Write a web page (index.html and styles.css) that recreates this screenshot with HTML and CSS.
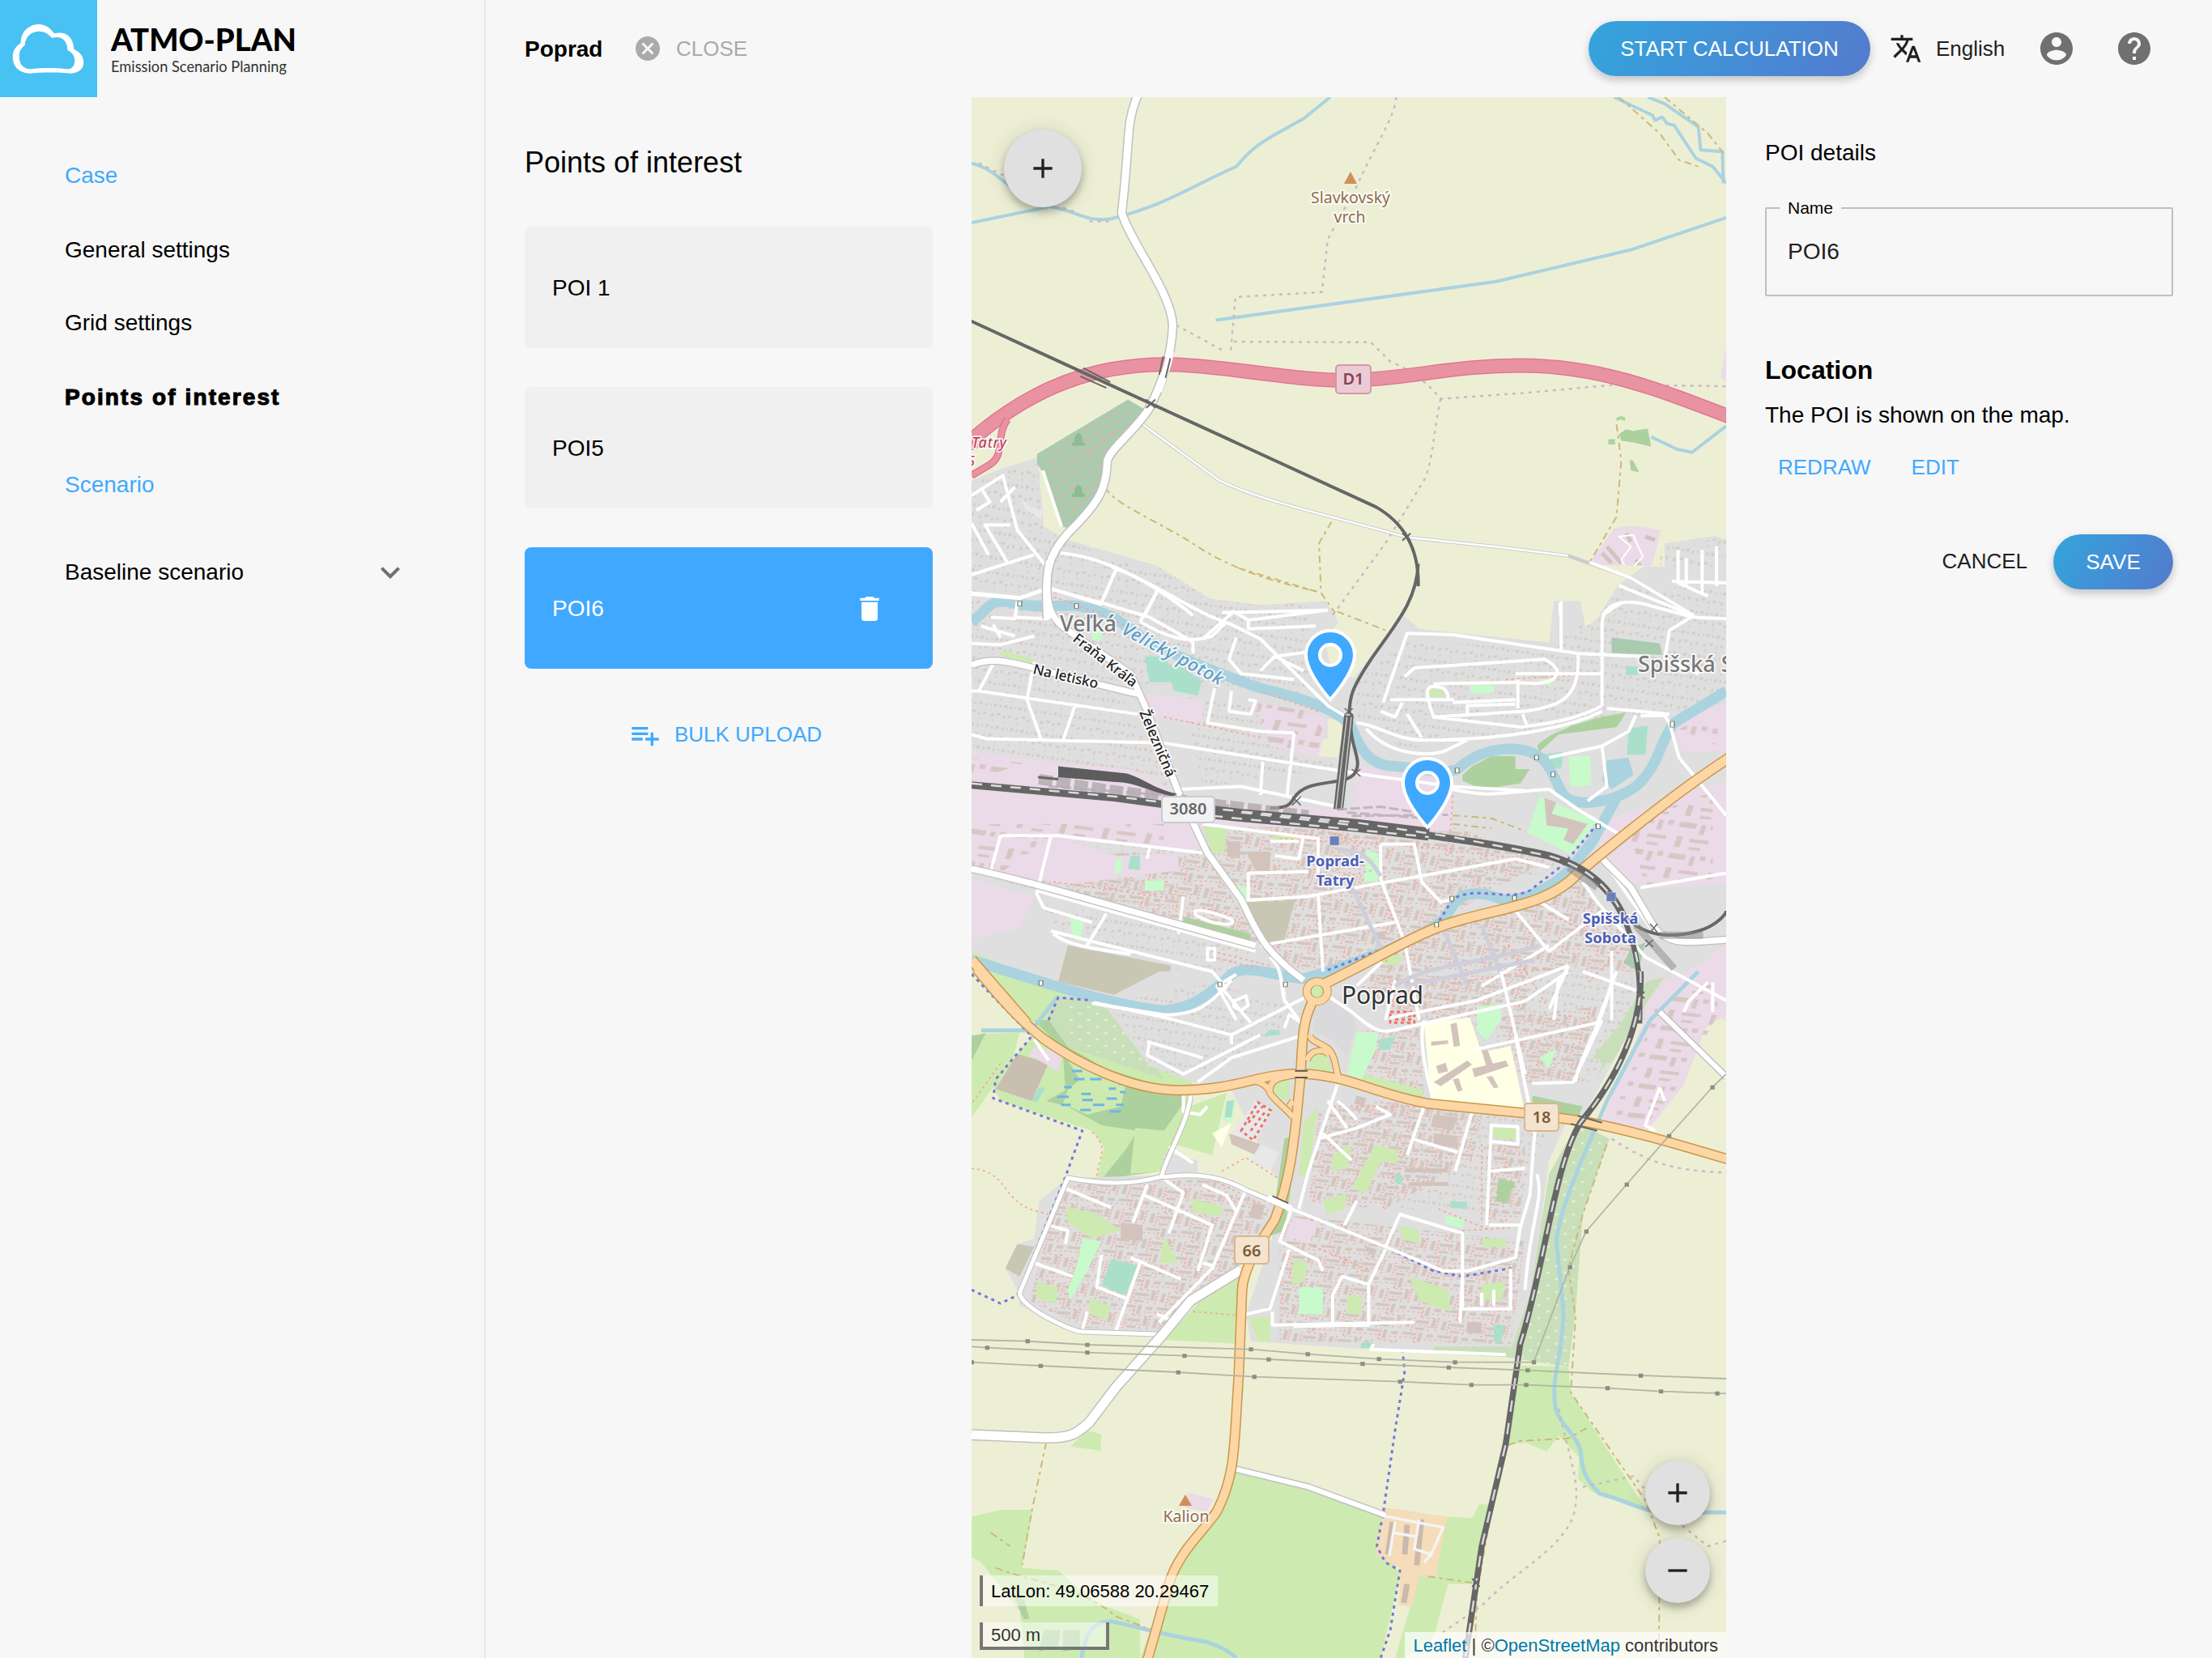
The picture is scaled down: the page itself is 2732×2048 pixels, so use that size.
FILE: index.html
```html
<!DOCTYPE html>
<html lang="en">
<head>
<meta charset="utf-8">
<title>ATMO-PLAN</title>
<link rel="stylesheet" href="styles.css">
</head>
<body>
<div class="app">
  <aside class="sidebar">
    <div class="brand">
      <svg class="brand-mark" viewBox="0 0 120 120"><path fill="#fff" fill-rule="evenodd" transform="scale(.3827 .3333)" d="M41 210C41 190 50 172 67 160C67 115 95 90 125 90C148 90 163 105 175 124C205 115 236 128 239 183C262 193 270 215 270 232C270 262 245 272 228 272C200 268 130 266 100 272C60 272 41 245 41 210ZM62 210C62 190 68 178 80 168C82 135 100 116 128 116C150 118 158 130 168 141C195 132 217 145 218 187C235 195 241 210 241 225C241 245 232 257 215 256C190 251 130 250 100 256C75 258 62 235 62 210Z"/></svg>
      <svg class="brand-name" viewBox="0 0 240 120"><text class="bn1" x="0" y="62.5" textLength="229" lengthAdjust="spacingAndGlyphs">ATMO-PLAN</text><text class="bn2" x="0" y="89" textLength="217" lengthAdjust="spacingAndGlyphs">Emission Scenario Planning</text></svg>
    </div>
    <nav class="nav">
      <a class="nav-head">Case</a>
      <a>General settings</a>
      <a>Grid settings</a>
      <a class="current">Points of interest</a>
      <a class="nav-head second">Scenario</a>
      <a class="expand">Baseline scenario<svg class="ic48" viewBox="0 0 24 24"><path d="M16.59 8.59L12 13.17 7.41 8.59 6 10l6 6 6-6z"/></svg></a>
    </nav>
  </aside>
  <div class="content">
    <header class="topbar">
      <b class="case-name">Poprad</b>
      <span class="close"><svg viewBox="0 0 24 24"><path d="M12 2C6.47 2 2 6.47 2 12s4.47 10 10 10 10-4.47 10-10S17.53 2 12 2zm5 13.59L15.59 17 12 13.41 8.41 17 7 15.59 10.59 12 7 8.41 8.41 7 12 10.59 15.59 7 17 8.41 13.41 12 17 15.59z"/></svg><span>CLOSE</span></span>
      <button class="pill start">START CALCULATION</button>
      <span class="lang"><svg class="ic40" viewBox="0 0 24 24"><path d="M12.87 15.07l-2.54-2.51.03-.03c1.74-1.94 2.98-4.17 3.71-6.53H17V4h-7V2H8v2H1v1.99h11.17C11.5 7.92 10.44 9.75 9 11.35 8.07 10.32 7.3 9.19 6.69 8h-2c.73 1.63 1.73 3.17 2.98 4.56l-5.09 5.02L4 19l5-5 3.11 3.11.76-2.04zM18.5 10h-2L12 22h2l1.12-3h4.75L21 22h2l-4.5-12zm-2.62 7l1.62-4.33L19.12 17h-3.24z"/></svg><span>English</span></span>
      <svg class="ic48 account" viewBox="0 0 24 24"><path d="M12 2C6.48 2 2 6.48 2 12s4.48 10 10 10 10-4.48 10-10S17.52 2 12 2zm0 3c1.66 0 3 1.34 3 3s-1.34 3-3 3-3-1.34-3-3 1.34-3 3-3zm0 14.2c-2.5 0-4.71-1.28-6-3.22.03-1.99 4-3.08 6-3.08 1.99 0 5.97 1.09 6 3.08-1.29 1.94-3.5 3.22-6 3.22z"/></svg>
      <svg class="ic48 help" viewBox="0 0 24 24"><path d="M12 2C6.48 2 2 6.48 2 12s4.48 10 10 10 10-4.48 10-10S17.52 2 12 2zm1 17h-2v-2h2v2zm2.07-7.75l-.9.92C13.45 12.9 13 13.5 13 15h-2v-.5c0-1.1.45-2.1 1.17-2.83l1.24-1.26c.37-.36.59-.86.59-1.41 0-1.1-.9-2-2-2s-2 .9-2 2H8c0-2.21 1.79-4 4-4s4 1.79 4 4c0 .88-.36 1.68-.93 2.25z"/></svg>
    </header>
    <div class="columns">
      <section class="list">
        <h1>Points of interest</h1>
        <div class="card">POI 1</div>
        <div class="card">POI5</div>
        <div class="card active"><span>POI6</span><svg class="ic40" viewBox="0 0 24 24"><path d="M6 19c0 1.1.9 2 2 2h8c1.1 0 2-.9 2-2V7H6v12zM19 4h-3.5l-1-1h-5l-1 1H5v2h14V4z"/></svg></div>
        <div class="bulk"><svg class="ic40" viewBox="0 0 24 24"><path d="M14 10H2v2h12v-2zm0-4H2v2h12V6zm4 8v-4h-2v4h-4v2h4v4h2v-4h4v-2h-4zM2 16h8v-2H2v2z"/></svg><span>BULK UPLOAD</span></div>
      </section>
      <section class="map">
        <svg class="tiles" viewBox="0 0 932 1928">
          <defs>
            <pattern id="homes" width="53" height="74" patternUnits="userSpaceOnUse" patternTransform="rotate(14)"><path fill="#d2c6bd" fill-opacity=".8" d="M2 4h6v10H2zM14 6h4v8h-4zM24 3h6v10h-6zM37 7h4v9h-4zM47 5h3v7h-3zM4 38h5v10H4zM15 34h8v7h-8zM30 40h4v10h-4zM40 36h5v9h-5zM10 58h3v6h-3zM34 60h3v5h-3z"/></pattern>
            <pattern id="estate" width="74" height="96" patternUnits="userSpaceOnUse" patternTransform="rotate(10)"><path fill="#d3c4bb" fill-opacity=".9" d="M4 6h26v10H4zM38 4h8v34h-8zM55 8h14v11H55zM6 50h8v34H6zM24 56h28v10H24zM58 46h8v32h-8zM26 82h20v8H26z"/><path fill="none" stroke="#fa9c92" stroke-width="3" stroke-dasharray="5 6" d="M0 26H32V0M34 44H74M52 28H74M20 46V96M22 74H54V96M70 40V96M32 26V44"/></pattern>
            <pattern id="sheds" width="90" height="110" patternUnits="userSpaceOnUse" patternTransform="rotate(12)"><path fill="#d3c3bd" fill-opacity=".85" d="M4 6h36v18H4zM50 8h10v34H50zM70 4h12v16H70zM8 56h12v38H8zM36 60h40v12H36zM40 88h24v9H40z"/></pattern>
            <pattern id="dots" width="36" height="48" patternUnits="userSpaceOnUse"><path fill="#e4efd9" d="M6 8h6v8H6zM24 32h6v8h-6z"/></pattern>
            <g id="pin"><path fill="#40a9ff" stroke="#fff" stroke-width="8" paint-order="stroke" d="M0-80C-15.500-80-28-67.500-28-52C-28-31 0 0 0 0S28-31 28-52C28-67.500 15.500-80 0-80ZM0-37A15 15 0 1 1 0-67A15 15 0 1 1 0-37Z" fill-rule="evenodd"/></g>
          </defs>
          <rect width="932" height="1928" fill="#edefd5"/>

          <!-- land use: north -->
          <g class="north">
            <g fill="#dfdfdf"><path d="M0 1160L60 1125L138 1090L150 1300L200 1340L390 1420L495 1515L600 1535L735 1522L765 1600H0ZM1440 1350L1545 1328L1568 1340V1600H1300L1340 1490L1400 1445L1440 1465ZM1208 1520H1263V1600H1208Z"/></g>
            <path fill="url(#homes)" d="M0 1170L60 1135L138 1110L150 1300L200 1350L390 1430L495 1515L600 1540L735 1530L765 1600H0ZM1450 1360L1545 1338L1568 1340V1600H1320L1350 1490Z"/>
            <path fill="#aacbaf" d="M325 915L360 945L345 995L283 1075L278 1150L240 1240L205 1305L187 1300L150 1140L136 1110V1080Z"/>
            <path class="l foot" d="M320 935L160 1080M335 950L155 1115M345 970L150 1150M300 1010L160 1170M280 1060L160 1200M278 1100L175 1220M270 1150L180 1250M255 1190L190 1280"/>
            <path fill="#8dbb93" d="M208 1046H213L216 1022Q222 1012 228 1022L231 1046H236V1055H208ZM208 1201H213L216 1180Q222 1168 228 1180L231 1201H236V1210H208Z"/>
            <path fill="#e8e8e8" d="M105 1215L120 1240L150 1250L145 1278L110 1245Z"/>
            <path fill="#add19e" d="M1340 980V970L1350 965L1358 970V980L1349 975ZM1345 1020L1360 1005L1375 1010L1405 1003L1412 1058L1375 1045L1350 1040ZM1323 1035h14v16h-14zM1367 1098L1375 1100L1387 1135L1370 1130Z"/>
            <path fill="#ebdbe8" d="M1335 1305L1370 1296L1433 1310L1415 1410L1395 1465L1350 1450L1284 1408ZM1568 750L1556 850L1568 860Z"/>
            <path class="l" stroke="#d3c3bd" stroke-width="5" d="M1320 1360L1350 1410M1310 1380L1330 1410M1360 1320L1370 1345M1400 1330L1420 1340M1380 1400L1400 1440"/>
            <path class="l" stroke="#fff" stroke-width="2" d="M1370 1450L1350 1400L1370 1360L1345 1330L1375 1325L1385 1360L1395 1390L1370 1430"/>
          </g>

          <!-- land use: town centre -->
          <g class="mid">
            <path fill="#dfdfdf" d="M0 0H1568V1568H0Z"/>
            <path fill="url(#homes)" d="M0 0H400L700 140V440L300 400L420 780L0 640ZM800 400L900 250L1200 290L1340 60L1568 80V480L1150 580L900 630L800 540ZM100 900H420V1250L0 1060ZM440 440L640 480L760 700L480 760ZM1000 940L1200 1010L1230 1050L1000 1110ZM420 1330L700 1440V1568H430ZM130 1150L600 1310L520 1400L200 1300Z"/>
            <path fill="url(#estate)" d="M480 900H1000L1200 1010L1000 1200L740 1390H640L500 1000ZM860 1340L1100 1180L1260 1080L1380 1300V1568H800ZM160 1000L480 980L600 1300L140 1130Z"/>
            <path fill="#edefd5" d="M385 -4L495 110L600 132L735 118L762 190L735 260L750 370L795 385L895 165L930 215L1200 262L1210 118L1265 118L1275 210L1300 180L1345 60L1400 -4ZM740 525L775 540L760 660L720 655V595H740Z"/>
            <g id="industry"><path fill="#ebdbe8" d="M0 640L180 680L330 700L430 780L500 810L760 840L1000 830V915L700 905L480 890V980L300 960L0 930ZM0 930L160 930L300 1000L430 990V1050L200 1100L0 1040ZM350 440L480 460V540L380 520ZM590 470L700 500L740 530L720 660L620 620ZM800 690L1000 740V910L790 860ZM1330 870L1568 740V1100L1400 1110L1290 1010ZM1440 550L1568 470V640L1480 640ZM0 1080L130 1140L100 1250L0 1290ZM1400 1530L1568 1300V1568H1400Z"/>
            <path fill="url(#sheds)" d="M0 660L110 680L0 740ZM0 890H400V960L0 930ZM0 950H150L60 1060H0ZM590 470L700 500L730 560L720 640L620 620ZM1360 880L1540 780V1080L1400 1100ZM1470 560L1550 510V620Z"/></g>
            <path fill="#add19e" d="M1175 620C1200 570 1290 520 1360 505L1340 555L1220 580L1180 640ZM1020 720L1040 690L1080 655H1130V700H1160L1140 750L1060 770L1020 740ZM440 1210L580 1270V1305L440 1250Z"/>
            <path fill="#aacbaf" d="M1330 245L1430 265L1435 305L1330 298ZM1370 1320L1400 1300L1385 1400L1355 1370Z"/>
            <path fill="#aae0cb" d="M360 310H405L410 345H435L478 395L470 445L420 430L415 400H370ZM1365 560L1405 550L1400 650L1362 650ZM1180 650L1230 640L1225 700L1200 690ZM330 1000H350V1050L325 1045ZM1360 345H1385V375H1360Z"/>
            <path fill="#cdebb0" d="M480 900L530 905L525 990L500 990ZM625 928L675 935V955L630 950ZM0 1330L140 1430L200 1480L160 1568H110L30 1420ZM60 290L130 320V335L60 308ZM950 425H980V450H945ZM870 1340L900 1350L880 1380L850 1370Z"/>
            <path fill="#c8facc" d="M1240 655H1285L1288 755L1245 762ZM1155 920L1180 795L1300 880L1245 995ZM1035 410H1085V435L1038 440ZM1180 390L1215 385L1200 415ZM820 980L845 990V1090L815 1090ZM1170 1460L1210 1500L1200 1530L1175 1520ZM1040 1520L1100 1510V1568H1035ZM300 1010H312V1060H296ZM545 1100L575 1110V1150L555 1145ZM360 1085H400V1120H360ZM205 1210L235 1225L225 1290L208 1270ZM250 215H270V255H250Z"/>
            <path fill="#d3c3bd" d="M1190 800L1215 815L1205 855L1280 890L1250 960L1230 945L1240 905L1195 895ZM570 985H620V1055L590 1050ZM530 950H558V1010L532 1000ZM840 1265L860 1260V1290L836 1285Z"/>
            <path fill="#aad3df" d="M1320 670L1365 660L1375 720L1330 770L1310 740Z"/>
            <path fill="#c7c7b4" d="M570 1160L672 1155L650 1290L600 1310ZM200 1310L415 1380L395 1520L180 1435Z"/>
          </g>

          <!-- land use: south -->
          <g class="south">
            <path fill="#edefd5" d="M0 0H25L140 235L0 235ZM0 235H1568V2544H0ZM1560 160L1525 210L1480 420H1568Z"/>
            <path fill="#cdebb0" d="M14 0H60L180 90L400 160L370 350L460 400L450 500L390 740L260 775L275 650L250 590L60 480L45 430L100 290L130 240ZM0 235L100 225L85 330L0 540Z"/>
            <path fill="#c8dfb9" d="M180 90L270 110L380 170L360 280L400 400L200 280L150 200Z"/><path fill="url(#dots)" d="M190 100L370 160L350 280L380 370L210 270Z"/>
            <path fill="#add19e" d="M190 310L440 450V480L390 740L270 770L320 660L345 590L270 570L200 500L155 480L195 440ZM0 240L30 228L0 330ZM130 180L160 180L200 280L260 340L200 310Z"/>
            <path fill="#cdebb0" d="M200 330L320 420L310 500L240 530L190 490L200 440L225 400ZM340 580L400 590L440 490L455 500L395 740L330 750Z"/>
            <path fill="#dfdfdf" d="M270 110L390 0H1390L1375 200L1270 540L1150 500L960 480L760 410L690 900L640 860L630 760L540 440L460 410L370 350ZM200 765L400 755L500 750L640 850L600 980L550 1110L390 1345L230 1335L100 1240L95 1180L70 1100L95 1010L130 990L140 850ZM700 400L960 490L1240 540L1200 700L1150 1380L1110 1410L950 1415L580 1370L570 1270L640 900ZM400 670L470 700V750H395Z"/>
            <path fill="#edefd5" d="M485 660L520 650L640 770L625 845L560 800L500 750Z"/>
            <path fill="url(#homes)" d="M280 120L500 40L690 150L540 340L420 390L370 340ZM820 20L1380 10L1360 200L1280 420L1150 410L900 200ZM740 500L900 470L1200 550L1140 900L900 880L740 760Z"/>
            <path fill="url(#estate)" d="M200 790L500 770L620 880L570 1080L390 1330L230 1320L120 1220L160 960ZM640 900L1150 1000L1120 1380L640 1370ZM720 520L880 480L1060 540L1040 700L860 880L700 860ZM820 10H1150L1160 140L940 190L840 100ZM1090 170L1300 130L1260 420L1150 410ZM810 220L930 210L940 460L820 400ZM1070 640L1150 650L1140 930L1070 930Z"/>
            <path fill="#cdebb0" d="M450 500L530 450L500 680L420 640ZM195 870L260 900L310 960L250 990L200 930ZM455 840L520 870V910L460 890ZM135 1150L180 1170L175 1230L135 1210ZM245 1210L290 1240L280 1290L245 1270ZM840 640L885 665V710L850 705L820 820L790 800ZM730 850L780 820L775 880L740 900ZM540 1120H555V1380L400 1365L470 1230ZM890 940L930 960V1010L895 990ZM910 1130L990 1180L995 1260L930 1220ZM1080 580H1135V620H1085ZM750 680L790 640L780 730L750 740ZM1060 990H1110V1020H1060ZM1060 1160L1110 1150L1100 1220L1060 1215ZM670 1070L700 1080L690 1150L665 1160ZM780 1200H810V1270H780ZM400 980L430 1080L390 1080ZM575 1280H620V1370H595ZM690 560L720 500L700 750L680 760ZM820 380L940 440L930 480L800 420Z"/>
            <path fill="#c8facc" d="M800 225L845 225L840 290L810 400L780 380ZM230 990L270 1000L240 1110L205 1220L200 1180L220 1080ZM680 1170H730V1270H680ZM985 905L1025 915L1020 950L985 935ZM1050 130L1100 120V180L1070 255L1050 220ZM1180 320L1215 285L1200 360ZM530 480L550 470L540 560L520 550Z"/>
            <path fill="#aae0cb" d="M850 250L880 240L870 290L845 290ZM290 1065L345 1090L320 1200L270 1165ZM995 850L1030 855V880L995 875ZM1085 1310H1108L1100 1375H1085ZM880 750L895 755V790L878 780ZM140 430L155 430L135 485L125 480ZM810 1375H835V1395H808ZM530 480L545 478L540 540L526 540ZM620 215L640 218V235L605 240Z"/>
            <path fill="#ffffe5" d="M940 190L1035 170L1060 300L1120 275L1148 505L955 475ZM500 600L540 560L520 650Z"/>
            <path fill="#d3c3bd" d="M995 195L1008 190L1015 275L1002 280ZM955 260L990 255V268L955 275ZM965 350L985 338L990 370L970 378ZM960 410L1030 330L1040 345L975 425ZM1060 295L1072 290L1085 350L1070 355ZM1040 360L1110 330L1116 350L1045 392ZM1000 400L1012 395L1020 440L1010 445ZM1070 390L1082 388L1095 430L1085 432ZM535 600L600 640L590 680L540 640ZM800 460L820 470L815 500L795 490ZM585 860L610 865L600 920L575 910ZM900 730H990V745H900ZM910 780H990V795H910ZM310 930L355 940V1000L310 990ZM815 1015L840 1030L830 1050ZM1030 1300H1060V1340H1030ZM960 530L1010 540L1000 590L955 575ZM960 600L1010 610V655L960 640Z"/>
            <path fill="#e8e8e8" d="M600 640L640 670L620 740L580 700ZM540 600L590 480L625 510L590 630Z"/>
            <path fill="#dadadc" d="M710 130L770 90L800 200L780 310L745 250L710 220Z"/>
            <path class="l foot2" d="M560 590L595 485L622 515L585 625ZM575 560L605 500M580 590L612 515M870 150L920 150V190L870 190ZM880 165H915M880 178H915"/>
            <path fill="#c9bfb0" d="M95 305L160 340L125 480L50 435Z"/><path fill="#ebdbe8" d="M1400 60L1568 -60V160L1525 210L1480 420L1400 600L1310 550L1400 170ZM130 280L190 300L180 370L120 310ZM670 910L720 930L700 1010L655 980ZM450 1930L502 1955L490 2000L445 1990Z"/>
            <path fill="url(#sheds)" d="M1420 130L1550 20V160L1470 420L1400 570L1330 540L1410 200Z"/>
            <path fill="#c7c7b4" d="M95 1010L130 1020L100 1130L70 1100Z"/>
            <path fill="#c8dfb9" d="M1260 560L1325 620L1270 900L1255 1260L1240 1465L1115 1430L1160 1200L1200 750ZM960 1390L1120 1390V1430L960 1415ZM1400 40L1440 20L1370 200L1300 390L1340 220ZM1340 210L1370 210L1330 340L1290 320Z"/>
            <path fill="url(#dots)" d="M1260 570L1310 620L1260 900L1240 1465H1120L1170 1200Z"/>
            <path fill="#add19e" d="M1165 460L1270 500L1260 540L1165 500ZM1095 770L1130 780L1110 860L1090 850ZM650 620L680 600L650 960L620 980Z"/>
            <path fill="#cdebb0" d="M1140 1460L1240 1465L1245 1560L1310 1740L1400 1990L1290 1930L1260 1880L1262 1800L1220 1720L1195 1780L1150 1745L1115 1755ZM540 1840L860 2010L850 2130L880 2200L890 2240L850 2544H350L390 2360L440 2150L500 2020ZM0 2020L60 1995H128L105 2210L180 2220L260 2340L350 2400V2544H110L100 2370L20 2190L0 2170ZM990 2020L1040 2025L1055 1975H1075L1040 2270H990L960 2470L900 2544H880L930 2240ZM240 1700L270 1715L268 1775L205 1760Z"/>
            <path fill="#add19e" d="M85 2300L110 2330L120 2400H108ZM150 2440H185L180 2500L140 2520ZM190 2440H225V2510L190 2520Z"/>
            <path fill="#f5dcba" d="M855 1985L988 2020L965 2240H930L915 2355L888 2350L890 2210L840 2160Z"/>
            <path class="l" stroke="#cbb9ae" stroke-width="7" d="M875 2040L865 2160M905 2050L900 2160M935 2030L925 2200M905 2270L898 2340"/>
            <path class="l" stroke="#f4f4f4" stroke-width="3.500" d="M850 2015L980 2060L955 2160L920 2140L930 2030M880 2040L868 2165M878 2080L925 2095M940 2190L955 2160"/>
            <path class="l" stroke="#6fb5e6" stroke-width="3" d="M208 369H230M212 399H235M246 399H270M192 429H208M285 434H300M228 454H248M178 464H202M230 476H252M280 471H302M186 494H206M252 494H276M300 494H316M226 513H248M287 518H310M306 417H318M308 447H320"/>
          </g>

          <!-- water -->
          <g class="north"><path class="l water" stroke-width="4" d="M0 200C60 220 80 300 160 330C220 345 240 380 290 368C400 330 470 260 550 210C590 140 610 130 690 65L745 0M0 380L160 332M507 675L1090 558L1370 462L1568 365M1412 1028L1465 1065L1497 1075L1568 995M1335 0L1415 55L1420 70L1435 60L1445 80L1460 85L1480 130L1505 185L1540 210L1568 260M1405 0L1440 20L1510 90L1515 160L1560 165L1562 260"/></g>
          <g class="mid"><path class="l water" stroke-width="13" d="M0 190C30 160 30 120 70 120C140 150 170 130 220 135C290 160 310 190 350 240C400 290 480 350 600 420C700 460 770 500 790 560C810 640 830 690 880 690C950 700 980 720 1010 700C1050 640 1100 620 1150 635C1200 660 1200 700 1230 790C1260 840 1340 810 1380 760C1430 690 1430 600 1460 540L1568 430M1340 800L1290 950L1245 1045C1200 1120 1140 1160 1100 1150C1040 1110 1010 1130 990 1200C960 1270 850 1340 740 1400L690 1425C640 1420 570 1370 540 1410C500 1470 460 1530 400 1535C300 1520 150 1440 0 1360"/></g>
          <g class="south"><path class="l water" stroke-width="5" d="M20 218H125L180 90M1510 0L1410 180L1320 480C1280 650 1220 880 1215 1000L1230 1260C1230 1400 1205 1500 1212 1600C1215 1670 1250 1700 1265 1770C1270 1850 1270 1870 1305 1935C1360 1960 1380 1990 1430 2005H1568M228 2544C240 2440 250 2410 290 2408C350 2430 400 2460 490 2485C530 2510 540 2530 550 2544"/></g>

          <!-- footpaths, tracks, boundaries -->
          <g class="north">
            <path class="l bound" d="M882 0C880 60 840 140 800 270L740 430L728 590L548 605L538 780M425 690L520 765M545 740L830 742L870 800C920 830 950 870 975 913L1150 895L1340 870L1568 875M975 913C960 1000 960 1100 940 1160L860 1350L750 1568M15 200L70 240M190 335L220 350M245 376H285"/>
            <path class="l track" d="M278 1180C290 1230 400 1290 480 1370C560 1440 640 1470 720 1497M748 1285L722 1350L726 1500L755 1560M1345 0L1430 110L1470 190L1510 210M1440 0L1530 110L1568 180M1340 990L1350 1100L1340 1270L1284 1408"/>
          </g>
          <g class="mid">
            <path class="l foot" d="M160 100C240 140 330 200 460 340M720 500L600 430M480 1180L600 1230M500 1330L620 1380M700 1100L860 1040M640 940L1000 975M850 1130L900 1300M1000 790L995 915M480 890L720 930M650 870L820 960M170 1090L430 1150M1110 390L1310 370M1310 370V480M400 520L600 590M1200 1200L1350 1320L1280 1440M1000 1440L1200 1390M800 1450L1000 1500M1090 1240L1200 1530M500 1350L600 1390M860 1340L880 1568"/>
            <path class="l track" d="M555 5L725 90M760 155L860 220M1000 860L1080 870L1150 915M1000 890L1080 905"/>
            <path class="l cycle" d="M740 1395L960 1255L1000 1150C1050 1100 1110 1160 1160 1120L1230 1030L1300 890M0 1380L110 1568M160 1568L180 1490L250 1500"/>
          </g>
          <g class="south">
            <path class="l cycle" d="M0 10L125 240L50 400L45 470L230 590L195 760L95 1200L60 1230L0 1180M690 900L860 1020L960 1110L1020 1130L1120 1100V1240M895 1400L900 1480L880 1700L855 2010L842 2130L860 2190L890 2220L870 2440L850 2544"/>
            <path class="l foot" d="M0 730C80 740 60 860 140 890L160 900M250 595C290 650 260 700 260 770M520 740L570 690L640 770M460 1260L555 1275M440 540L400 700M60 340L0 490M740 500L950 500M1060 640V930M700 1010L830 1110M500 770L600 860M1020 960L1120 950M970 880L1080 960"/>
            <path class="l track" d="M155 1745L125 2000L105 2200M1320 640L1270 900L1240 1100L1255 1280L1245 1560L1400 1960L1430 2100L1428 2540M1115 1755L1140 1740L1240 1730L1280 1690M1040 2265L940 2240M1120 1600L1090 1900L1050 2300L1045 2544M40 2080L80 2130M50 2210C120 2260 230 2280 300 2390L360 2430"/>
            <path class="l bound" d="M1220 1620C1240 1800 1270 1900 1250 2020C1220 2150 1130 2220 1060 2350L970 2460M1330 620C1400 700 1450 740 1568 745M1270 1910L1375 1870L1440 2000L1530 2130L1568 2110"/>
          </g>

          <!-- streets -->
          <g class="north">
            <path class="l minor-c" d="M355 990L515 1160C600 1220 700 1250 905 1332L1100 1362L1240 1388L1370 1455L1500 1568"/><path class="l minor" stroke-width="2.500" d="M355 990L515 1160C600 1220 700 1250 905 1332L1100 1362L1240 1388"/>
            <path class="l st" d="M1284 1408L1370 1455L1500 1568M0 1205L65 1145L95 1310L155 1420M0 1445L130 1385M20 1185L38 1225L10 1250M75 1410L28 1295H80M185 1380C260 1390 350 1440 460 1568M0 1500L100 1515L160 1485L270 1535M300 1430L270 1530M385 1495L360 1568M0 1290L35 1385M148 1130L187 1300M520 1560L740 1553M1468 1370V1470L1530 1510M1485 1395V1480M1518 1370V1500M1548 1360V1480M1455 1465L1568 1470M1223 1530V1568M60 1225L90 1180M1350 1530L1310 1568"/>
          </g>
          <g class="mid">
            <path class="l st" d="M0 95L100 110L160 75L270 125L370 175L460 260L460 300M290 0C400 70 450 150 540 200L600 250L740 480L780 520M300 10L270 125M385 90L350 190M480 250L545 155L575 185L740 150M575 185V215L715 205M550 245L535 320L560 370L670 390M630 310L700 295M690 360L630 310L600 360M350 190C400 240 450 270 500 240L530 190M90 175L160 180M95 120L90 180L40 175M45 200L60 245M0 265L60 270L130 240M20 205L90 240M15 430L345 510M130 330L115 460L145 600M0 430L15 430L50 320M215 480L190 600M0 580L30 595L400 610L820 720L1000 760L1150 775M670 575L655 800M605 675L600 790M670 575L600 570L490 540L505 420M540 430L535 500L580 510L590 465L575 460M430 770L560 760L760 830M855 470L905 230L1000 235L1260 300L1390 310M1225 120V290M1310 480L1310 200C1310 130 1350 110 1400 130L1500 175L1568 180M1320 490L1450 510M1345 65L1500 170L1450 220L1440 320L1510 370M1310 480C1250 540 1150 550 1145 555L960 520C940 430 940 400 980 420C1000 450 980 460 1000 460L870 460M900 380L920 350L1190 320C1240 360 1220 420 1130 400L960 405M1260 300C1265 450 1230 480 1150 500L960 520M1135 390V490M1000 470L1130 460M1030 510L1030 480L1130 475M1145 510L1155 555M905 510L935 590M850 500L880 520L895 470M800 540C850 550 880 600 940 600C1100 600 1240 560 1310 500M820 560C860 640 930 660 980 640L1030 600M1130 370L1310 370M1390 515L1440 515L1450 540L1470 660L1568 860M1380 515L1365 570L1310 620L1320 760L1280 810M1000 770C1080 800 1100 780 1200 770L1260 840L1350 930M1310 620L1200 660M1470 660L1510 740"/>
            <path class="l st" d="M60 930L180 930L480 990M60 930L40 1050M165 930L135 1130L150 1180L250 1230M135 1120L590 1330M370 970L365 1010M440 1140L430 1270M165 1260L500 1400L530 1460M240 1310L280 1200M470 1210C450 1180 480 1180 540 1220C550 1240 530 1240 500 1230ZM170 1270C200 1310 250 1320 330 1340M560 1155L700 1140L830 1100L1000 1050L1130 1010L1200 1040M575 1150V1060L700 1055M600 1310L880 1230M720 1130L730 1400M480 890L720 940V1060M850 960H920L935 1090L975 1160L1000 1150M850 960L850 1080L900 1300L930 1568M800 1450L850 1370L840 1330M1270 1090L1300 1160L1400 1350L1568 1500M1130 1190L1200 1330L1310 1190M1180 1160L1240 1220M860 1568L880 1430M1200 1310L1060 1450M1240 1380L1200 1530M1330 1330V1568M620 950H680M630 1000L680 1010L690 930M870 1560L1050 1500L1240 1380M1390 1110L1568 1060M1310 1010L1420 1270M1210 1568L1220 1420M550 1410L510 1450L550 1568M250 1510L400 1550C480 1550 500 1500 540 1430M620 1350C650 1400 640 1440 650 1500L680 1568M490 1320h15v40h-15z"/>
            <path class="l ped" d="M760 980C820 980 830 1020 850 1070M790 1110L860 1350M980 1250L1030 1450M1060 1240L1100 1410M880 1450C950 1370 1050 1380 1180 1310M900 1450L1170 1360"/>
          </g>
          <g class="south">
            <path class="l st" d="M255 115L400 170L540 235L700 90M515 50L580 190M540 235V270M570 90L545 110L545 130L560 145L575 125ZM470 410L540 320L690 235M365 260L480 320M370 260L365 310L440 380L600 235M650 90L640 0M650 210L660 160L685 190M740 90L790 150C850 240 850 230 920 200L1150 110L1240 0M940 180C930 250 940 350 960 480M1045 290L1300 190M1150 380L1100 0M1130 240L1170 600L1160 830L1140 950L1130 1060M1300 190L1340 0M1310 180L1250 410L1165 415M1380 70L1270 0M1330 40C1310 200 1260 320 1255 410M760 420L700 740L680 880M760 480C790 520 795 540 800 550M730 600L790 700M740 480L780 580M720 620L800 580L870 530L840 500M940 500L905 680M1040 520L1005 740M915 620L1010 670M1070 940L1080 570L1135 575V640L1080 630M1075 740L1150 730M1075 940H1140L1130 1060L1030 1110H980L860 1020L665 880M860 1020L890 900L1020 970V1250H1120V1100M860 1030L825 1160V1310L670 1315M750 1310V1200L770 1130L825 1160M665 880L640 1000L720 1070L730 1110M660 1030L620 1250L570 1270M625 1260V1310L920 1300M800 850L775 940M1020 1110L1015 1300M1085 1240V1180M1060 1240V1190"/>
            <path class="l st" d="M190 800L290 875M365 790L335 930M360 830L500 940L470 1110M400 770L440 820L410 970M570 810L500 1100L390 1300M480 790L530 830L550 890M160 940L200 960L195 1010M130 1080L210 1130M270 1050L260 1170L320 1210M350 1080L300 1330M330 1060L435 1140M240 1260L230 1330M440 460V520L475 530L490 500M410 650L460 710M385 1270L420 1295M480 1080L500 1090M130 250L160 330M1480 150L1490 110L1530 40M1540 40L1540 150M1430 430L1400 570L1420 590M1430 430L1440 480M1175 750C1190 850 1160 920 1150 1180M1110 1420L830 1400L835 1380"/>
            <path class="l main-c" stroke-width="7" d="M570 810C480 720 400 770 395 760C330 790 280 790 200 765L100 1190C100 1240 200 1330 230 1335L390 1345M570 810L665 880M455 460C450 560 400 700 395 760"/><path class="l minor" stroke-width="5" d="M570 810C480 720 400 770 395 760C330 790 280 790 200 765L100 1190C100 1240 200 1330 230 1335L390 1345M570 810L665 880M455 460C450 560 400 700 395 760"/>
            <path class="l main-c" stroke-width="9" d="M540 1840L700 1910L860 2015M1568 390L1430 150"/><path class="l minor" stroke-width="6" d="M540 1840L700 1910L860 2015M1568 390L1430 150"/>
          </g>
          <g class="north"><path class="l main-c" stroke-width="12" d="M345 -5C320 80 330 120 312 350C330 440 415 590 418 690C415 800 390 880 370 940C340 1010 290 1060 282 1100C280 1180 270 1220 200 1320C150 1400 155 1450 157 1580"/></g>
          <g class="mid"><path class="l main-c" stroke-width="10" d="M160 -20C155 80 150 170 200 220L330 370L360 480L430 780L490 990L560 1150C590 1250 600 1320 690 1430M0 340C60 300 100 345 345 440M0 1045C150 1100 300 1180 590 1310M1310 1010L1370 1110L1420 1250C1450 1310 1480 1300 1568 1290"/></g>
          <g class="south"><path class="l main-c" stroke-width="14" d="M0 1717L150 1728C210 1730 220 1710 245 1670L300 1540L395 1350L455 1220L560 1105"/></g>
          <g class="north"><path class="l minor" stroke-width="9" d="M345 -5C320 80 330 120 312 350C330 440 415 590 418 690C415 800 390 880 370 940C340 1010 290 1060 282 1100C280 1180 270 1220 200 1320C150 1400 155 1450 157 1580"/></g>
          <g class="mid"><path class="l minor" stroke-width="7.500" d="M160 -20C155 80 150 170 200 220L330 370L360 480L430 780L490 990L560 1150C590 1250 600 1320 690 1430M0 340C60 300 100 345 345 440M0 1045C150 1100 300 1180 590 1310M1310 1010L1370 1110L1420 1250C1450 1310 1480 1300 1568 1290"/></g>
          <g class="south"><path class="l minor" stroke-width="11" d="M0 1717L150 1728C210 1730 220 1710 245 1670L300 1540L395 1350L455 1220L560 1105"/></g>

          <!-- motorway -->
          <g class="north">
            <path class="l" stroke="#e0708f" stroke-width="18" d="M-10 1050C120 880 260 800 430 810C560 820 680 860 790 857C920 850 1000 812 1140 812C1300 812 1420 880 1580 970"/>
            <path class="l" stroke="#e892a2" stroke-width="15.500" d="M-10 1050C120 880 260 800 430 810C560 820 680 860 790 857C920 850 1000 812 1140 812C1300 812 1420 880 1580 970"/>
            <path class="l" stroke="#e0708f" stroke-width="9" d="M75 975C50 1020 70 1080 40 1110L0 1145M-5 1060L30 1040"/><path class="l" stroke="#e892a2" stroke-width="6.500" d="M75 975C50 1020 70 1080 40 1110L0 1145M-5 1060L30 1040"/>
            <path class="l minor" stroke-width="9" d="M413 770C408 820 395 860 388 890"/>
          </g>

          <!-- primary roads -->
          <g class="south"><path fill="#cdebb0" stroke="#cdebb0" d="M700 360C705 290 740 290 745 340V375H700ZM660 390C600 410 620 470 660 475Z"/></g>
          <g class="mid"><path class="l" stroke="#c9974c" stroke-width="14" d="M730 1445C850 1350 930 1260 1010 1225C1100 1180 1200 1170 1260 1060C1330 960 1480 760 1580 655M0 1360L115 1580"/></g>
          <g class="south"><path class="l" stroke="#c9974c" stroke-width="13" d="M10 -10C60 100 100 180 150 250C220 340 330 440 430 440C560 440 600 370 700 380C800 395 830 450 950 490L1150 525L1270 555C1400 600 1500 660 1580 700M712 100C680 200 690 300 680 450C670 650 660 780 630 920C600 1000 565 1100 562 1180L555 1500C545 1750 550 1860 510 2000C480 2080 430 2150 410 2270L365 2554"/><path class="l" stroke="#c9974c" stroke-width="9" d="M703 235C705 260 720 260 740 285C760 320 755 370 765 405M697 330C705 285 735 285 742 310M580 400C600 410 615 420 620 450C630 480 650 500 668 540M660 388C625 395 618 420 620 450M668 480L660 500"/><ellipse class="l" stroke="#c9974c" stroke-width="11" cx="718" cy="74" rx="21" ry="36"/></g>
          <g class="mid"><path class="l" stroke="#fcd6a4" stroke-width="11" d="M730 1445C850 1350 930 1260 1010 1225C1100 1180 1200 1170 1260 1060C1330 960 1480 760 1580 655M0 1360L115 1580"/></g>
          <g class="south"><path class="l" stroke="#fcd6a4" stroke-width="10" d="M10 -10C60 100 100 180 150 250C220 340 330 440 430 440C560 440 600 370 700 380C800 395 830 450 950 490L1150 525L1270 555C1400 600 1500 660 1580 700M712 100C680 200 690 300 680 450C670 650 660 780 630 920C600 1000 565 1100 562 1180L555 1500C545 1750 550 1860 510 2000C480 2080 430 2150 410 2270L365 2554"/><path class="l" stroke="#fcd6a4" stroke-width="6.500" d="M703 235C705 260 720 260 740 285C760 320 755 370 765 405M697 330C705 285 735 285 742 310M580 400C600 410 615 420 620 450C630 480 650 500 668 540M660 388C625 395 618 420 620 450M668 480L660 500"/><ellipse class="l" stroke="#fcd6a4" stroke-width="9" cx="718" cy="74" rx="21" ry="36"/><ellipse fill="#cdebb0" stroke="#c9974c" stroke-width="2" cx="718" cy="74" rx="13" ry="23"/>
            <path class="l" stroke="#555" stroke-width="2" d="M672 368H698M672 393H698"/><path class="l" stroke="#555" stroke-width="10" d="M622 843L655 870"/><path class="l minor" stroke-width="8" d="M615 840L665 880"/></g>

          <!-- railways -->
          <g class="north"><path class="l rail" stroke-width="4" d="M-5 675L840 1240C900 1290 930 1370 928 1480"/><path class="l rail" stroke-width="2" d="M232 820L288 862M226 845L280 880M363 915L382 940M382 915L363 940M895 1320L912 1342M912 1320L895 1342M398 785L390 840M413 790L403 850"/></g>
          <g class="mid">
            <path class="l rail" stroke-width="4" d="M928 -10C925 120 880 200 830 320C790 420 785 450 785 510M790 510C780 600 810 660 800 700C790 770 700 720 670 800C660 830 650 835 620 835M1360 1210C1400 1290 1470 1280 1510 1260C1550 1240 1568 1200 1568 1190"/>
            <path class="l rail" stroke-width="12" d="M784 515L762 840"/><path class="l" stroke="#c9c9c9" stroke-width="1.500" d="M780 520L757 840M789 520L768 840"/>
            <path class="l" stroke="#a9a5a8" stroke-opacity=".75" stroke-width="13" stroke-dasharray="17 5" d="M140 735L300 775L420 800L560 850M500 820L700 860"/><path class="l" stroke="#b5adb3" stroke-opacity=".8" stroke-width="3" stroke-dasharray="12 4" d="M760 840L850 830L970 862M780 850L960 872M790 862L990 858M160 760L400 790"/>
            <path class="l" stroke="#5d5d5d" stroke-width="10" d="M185 712L320 732"/><path fill="#5d5d5d" d="M180 690L320 715C350 725 380 770 425 785L420 795C370 780 340 745 300 745L180 728Z"/><path class="l rail" stroke-width="3" d="M138 728L180 735"/>
            <path class="l rail" stroke-width="9" d="M0 755L300 800L520 850L800 895"/><path class="l rail" stroke-width="16" d="M470 843L560 860L800 895L950 925"/>
            <path class="l rail" stroke-width="9" d="M800 895C950 930 1100 960 1200 1000C1280 1040 1330 1110 1360 1230"/><path class="l rail" stroke-width="6.500" d="M1350 1200C1390 1330 1390 1450 1388 1580"/>
            <path class="l" stroke="#ddd" stroke-width="2.500" stroke-dasharray="13 11" d="M0 750L300 795L520 840L800 885L1000 935L1200 1000C1280 1040 1330 1110 1360 1230C1390 1350 1390 1450 1388 1568M500 862L800 910L950 935M560 850L800 895"/>
            <path class="l" stroke="#8a8a8a" stroke-width="9" d="M1240 1040L1300 1110M1380 1240L1460 1390M1430 1275H1520" stroke-opacity=".5"/>
            <path class="l rail" stroke-width="1.500" d="M775 490L792 512M792 490L775 512M666 795L684 825M684 795L666 825M790 700L808 725M808 700L790 725M1410 1235L1425 1265M1425 1235L1410 1265M1400 1290L1416 1315M1416 1290L1400 1315"/>
          </g>
          <g class="south"><path class="l rail" stroke-width="7.500" d="M1390 0C1395 200 1340 400 1265 560C1210 720 1190 1100 1140 1380L1110 1750L1060 2130L1025 2554"/><path class="l" stroke="#d8d8d8" stroke-width="2.500" stroke-dasharray="14 14" d="M1390 0C1395 200 1340 400 1265 560C1210 720 1190 1100 1140 1380L1110 1750L1060 2130L1025 2554"/><path class="l rail" stroke-width="2" d="M1040 2250L1056 2280M1056 2250L1040 2280M1382 75L1398 100M1398 75L1382 100M1260 535L1310 560M1245 565L1300 590"/></g>

          <!-- power lines -->
          <g class="south">
            <path class="l" stroke="#b3b4a4" stroke-width="1.800" d="M0 1365L116 1370L240 1383L580 1400L698 1418L846 1436L1004 1448L1168 1448L1243 1095L1277 963L1361 789L1449 609L1539 429L1568 380M0 1390L32 1394L240 1412L442 1424L617 1437L812 1454L991 1467L1155 1478L1390 1497L1568 1509M0 1448L143 1461L429 1485L587 1502L890 1520L1038 1532L1152 1532L1321 1544L1432 1556L1568 1564"/>
            <path fill="#8b8c82" d="M112 1363h9v15h-9zM236 1376h9v15h-9zM576 1393h9v15h-9zM694 1411h9v15h-9zM842 1429h9v15h-9zM1000 1441h9v15h-9zM1164 1441h9v15h-9zM1239 1088h9v15h-9zM1273 956h9v15h-9zM1357 782h9v15h-9zM1445 602h9v15h-9zM1535 422h9v15h-9zM28 1387h9v15h-9zM236 1405h9v15h-9zM438 1417h9v15h-9zM613 1430h9v15h-9zM808 1447h9v15h-9zM987 1460h9v15h-9zM1151 1471h9v15h-9zM1386 1490h9v15h-9zM139 1454h9v15h-9zM425 1478h9v15h-9zM583 1495h9v15h-9zM886 1513h9v15h-9zM1034 1525h9v15h-9zM1148 1525h9v15h-9zM1317 1537h9v15h-9zM1428 1549h9v15h-9zM1545 1556h9v15h-9zM0 1441h5v15h-5z"/>
          </g>

          <!-- bridges and stations -->
          <g class="mid"><path fill="#fff" stroke="#775" stroke-width="2" d="M96 120h8v16h-8zM214 128h8v16h-8zM1005 697h8v16h-8zM1170 652h8v16h-8zM1204 710h8v16h-8zM1298 890h8v16h-8zM994 1140h8v16h-8zM1124 1138h8v16h-8zM962 1230h8v16h-8zM512 1437h8v16h-8zM648 1437h8v16h-8zM140 1432h8v16h-8zM1452 535h8v20h-8z"/><path fill="#6b7fb8" stroke="#fff" stroke-width="1" d="M744 932h20v32h-20zM1319 1126h20v32h-20z"/></g>

          <!-- labels -->
          <g fill="#d08f55"><path d="M468 92L476 107H460ZM264 1726L272 1740H256Z"/></g>
          <g class="t peak"><text x="468" y="131">Slavkovský</text><text x="467" y="155">vrch</text><text x="265" y="1760">Kalion</text></g>
          <g class="t place"><text x="109" y="660" textLength="70">Veľká</text><text x="823" y="710">Spišská S</text></g>
          <text class="t city" x="457" y="1120" textLength="101">Poprad</text>
          <g class="t station"><text x="449" y="950">Poprad-</text><text x="449" y="974">Tatry</text><text x="789" y="1021">Spišská</text><text x="789" y="1045">Sobota</text></g>
          <g class="t street"><text transform="translate(124 671) rotate(38)" textLength="95">Fraňa Kráľa</text><text transform="translate(75 712) rotate(13)" textLength="82">Na letisko</text><text transform="translate(207 760) rotate(67)" textLength="88">Železničná</text></g>
          <text class="t river" transform="translate(184 662) rotate(28)" textLength="138">Velický potok</text>
          <g class="t exit"><text x="0" y="433" textLength="43">Tatry</text><text x="-6" y="456">5</text></g>
          <g class="shield"><rect x="450" y="331" width="43" height="35" rx="4" fill="#ebccd5" stroke="#d796a9"/><text x="471.500" y="355" fill="#85445a">D1</text><rect x="235" y="864" width="65" height="32" rx="4" fill="#f2f2f2" stroke="#ccc"/><text x="267.500" y="886" fill="#666">3080</text><rect x="683" y="1243" width="42" height="34" rx="4" fill="#f4e4cf" stroke="#d9b78c"/><text x="704" y="1267" fill="#7b5a33">18</text><rect x="325" y="1407" width="42" height="34" rx="4" fill="#f4e4cf" stroke="#d9b78c"/><text x="346" y="1432" fill="#7b5a33">66</text></g>

          <use href="#pin" x="443" y="741"/><use href="#pin" x="563" y="899"/>
        </svg>
        <button class="fab add"><svg class="ic40" viewBox="0 0 24 24"><path d="M19 13h-6v6h-2v-6H5v-2h6V5h2v6h6v2z"/></svg></button>
        <div class="zoom">
          <button class="fab"><svg class="ic40" viewBox="0 0 24 24"><path d="M19 13h-6v6h-2v-6H5v-2h6V5h2v6h6v2z"/></svg></button>
          <button class="fab"><svg class="ic40" viewBox="0 0 24 24"><path d="M19 13H5v-2h14v2z"/></svg></button>
        </div>
        <div class="gauges"><div class="latlon">LatLon: 49.06588 20.29467</div><div class="scale">500 m</div></div>
        <div class="credit"><a>Leaflet</a> | ©<a>OpenStreetMap</a> contributors</div>
      </section>
      <section class="details">
        <h2>POI details</h2>
        <fieldset class="field"><legend>Name</legend><span>POI6</span></fieldset>
        <h3>Location</h3>
        <p>The POI is shown on the map.</p>
        <div class="links"><a>REDRAW</a><a>EDIT</a></div>
        <div class="actions"><span>CANCEL</span><button class="pill save">SAVE</button></div>
      </section>
    </div>
  </div>
</div>
</body>
</html>
```
FILE: styles.css
```css
* { box-sizing: border-box; }
body { margin: 0; background: #f7f7f7; color: #000; font: 28px/32px "Liberation Sans", Arial, sans-serif; }
button { border: 0; margin: 0; padding: 0; font: inherit; }
h1, h2, h3, p { margin: 0; font-weight: 400; }
svg { display: block; flex: none; fill: currentColor; }
.ic40 { width: 40px; height: 40px; }
.ic48 { width: 48px; height: 48px; color: #707070; }

.app { display: flex; width: 2732px; height: 2048px; overflow: hidden; }
.sidebar { width: 600px; border-right: 2px solid #e8e8e8; }
.brand { display: flex; height: 120px; gap: 17px; }
.brand-mark { width: 120px; height: 120px; background: #48c1f3; }
.brand-name { width: 240px; height: 120px; }
.bn1 { font: 900 38.500px Lato, sans-serif; fill: #000; }
.bn2 { font: 400 18.500px Lato, sans-serif; fill: #333; }

.nav { display: flex; flex-direction: column; padding: 81px 80px 0; }
.nav a { height: 32px; margin-bottom: 58px; }
.nav .nav-head { color: #40a9ff; margin-bottom: 60px; }
.nav .current { font-weight: 700; letter-spacing: 2.100px; -webkit-text-stroke: 1.100px #000; margin: 2px 0 76px; }
.nav .second { margin-bottom: 76px; }
.nav .expand { display: flex; align-items: center; justify-content: space-between; padding-right: 12px; }

.content { display: flex; flex-direction: column; width: 2132px; }
.topbar { display: flex; align-items: center; height: 120px; padding: 0 72px 0 48px; font-size: 26px; }
.case-name { font-size: 28px; width: 134px; padding-top: 1px; }
.close { display: flex; align-items: center; gap: 17px; color: #aaa; }
.close svg { width: 36px; height: 36px; }
.close span, .lang span { margin-top: -1px; }
.pill { display: flex; align-items: center; justify-content: center; height: 68px; border-radius: 34px; padding-bottom: 1px; color: #fff; font-size: 26px; background: linear-gradient(120deg, #33a5dd, #547acd); box-shadow: 0 6px 10px rgba(0, 0, 0, .14), 0 2px 14px rgba(0, 0, 0, .08); }
.start { width: 348px; margin-left: auto; margin-right: 24px; }
.lang { display: flex; align-items: center; gap: 17px; width: 182px; color: #212121; }
.help { margin-left: 48px; }

.columns { display: flex; height: 1928px; }
.list { width: 600px; padding: 59px 48px 0; display: flex; flex-direction: column; }
.list h1 { font-size: 36px; line-height: 44px; margin-bottom: 57px; }
.card { display: flex; align-items: center; justify-content: space-between; height: 150px; margin-bottom: 48px; padding: 2px 58px 0 34px; border-radius: 8px; background: #f0f0f0; }
.card.active { background: #40a9ff; color: #fff; }
.bulk { display: flex; align-items: center; align-self: center; gap: 16px; margin: 14px 8px 0 0; color: #40a9ff; font-size: 26px; }
.bulk span { margin-top: -2px; }

.map { position: relative; width: 932px; overflow: hidden; }
.tiles { width: 932px; height: 1928px; }
.north { transform: scale(.5944, .40816); }
.mid { transform: translate(0, 580px) scale(.5944, .35714); }
.south { transform: translate(0, 1080px) scale(.5944, .33333); }
.l { fill: none; vector-effect: non-scaling-stroke; stroke-linejoin: round; }
.water { stroke: #aad3df; }
.foot { stroke: #f5a79d; stroke-width: 1.800; stroke-dasharray: 3 4; }
.foot2 { stroke: #ee7168; stroke-width: 3; stroke-dasharray: 4 4; }
.track { stroke: #cdb878; stroke-width: 2; stroke-dasharray: 9 5 4 5; }
.bound { stroke: #cdb8c4; stroke-width: 2.500; stroke-dasharray: 4 6; }
.cycle { stroke: #7378d8; stroke-width: 3; stroke-dasharray: 4 5; }
.minor-c { stroke: #ccc; stroke-width: 4.500; }
.minor { stroke: #fff; }
.main-c { stroke: #c0c0c0; }
.st { stroke: #fff; stroke-width: 4; }
.ped { stroke: #cfcfdc; stroke-width: 5; }
.rail { stroke: #666; }
.t { paint-order: stroke; stroke-linejoin: round; stroke: rgba(255, 255, 255, .75); stroke-width: 4px; font-family: "Noto Sans", sans-serif; }
.peak { font-size: 19.500px; fill: #8f6c4d; text-anchor: middle; }
.place { font-size: 27px; font-weight: 500; fill: #777; }
.city { font-size: 30px; fill: #333; }
.station { font-size: 18.500px; font-weight: 700; fill: #4d5fb8; text-anchor: middle; }
.street { font-size: 17.500px; font-weight: 500; fill: #222; }
.river { font-size: 22px; font-weight: 500; font-style: italic; fill: #5f9cc5; }
.exit { font-size: 18px; font-style: italic; fill: #b5364b; }
.shield { font: 600 20px "Noto Sans", sans-serif; text-anchor: middle; stroke-width: 2; }

.fab { display: flex; align-items: center; justify-content: center; width: 80px; height: 80px; border-radius: 50%; background: #e0e0e0; color: #212121; box-shadow: 0 6px 10px rgba(0, 0, 0, .24), 0 2px 24px rgba(0, 0, 0, .14); }
.add { position: absolute; left: 40px; top: 40px; width: 96px; height: 96px; }
.zoom { position: absolute; right: 20px; top: 1684px; display: flex; flex-direction: column; gap: 16px; }
.gauges { position: absolute; left: 10px; bottom: 10px; display: flex; flex-direction: column; gap: 20px; font-size: 22px; }
.latlon { width: 294px; height: 38px; padding: 4px 0 0 10px; line-height: 32px; border-left: 4px solid #777; background: rgba(255, 255, 255, .5); }
.scale { width: 160px; height: 34px; padding-left: 10px; line-height: 32px; border: 4px solid #777; border-top: 0; background: rgba(255, 255, 255, .5); color: #333; }
.credit { position: absolute; right: 0; bottom: 0; height: 32px; padding: 1px 10px 0; font-size: 22px; white-space: nowrap; color: #333; background: rgba(255, 255, 255, .7); }
.credit a { color: #0078a8; }

.details { width: 600px; padding: 53px 48px 0; }
.details h2 { font-size: 28px; line-height: 32px; }
.field { height: 118px; margin: 43px 0 0; padding: 0 0 0 26px; border: 2px solid #bfbfbf; border-radius: 2px; min-width: 0; }
.field legend { margin-left: -10px; padding: 0 10px; font-size: 21px; line-height: 18px; }
.field span { display: block; margin-top: 29px; color: #212121; }
.details h3 { font-size: 32px; line-height: 36px; font-weight: 700; margin-top: 73px; }
.details p { margin-top: 22px; }
.links { display: flex; gap: 50px; margin: 32px 0 0 16px; color: #40a9ff; font-size: 26px; }
.actions { display: flex; align-items: center; justify-content: flex-end; gap: 32px; margin-top: 67px; font-size: 26px; color: #212121; }
.actions span { margin-top: -2px; }
.save { width: 148px; }
```
